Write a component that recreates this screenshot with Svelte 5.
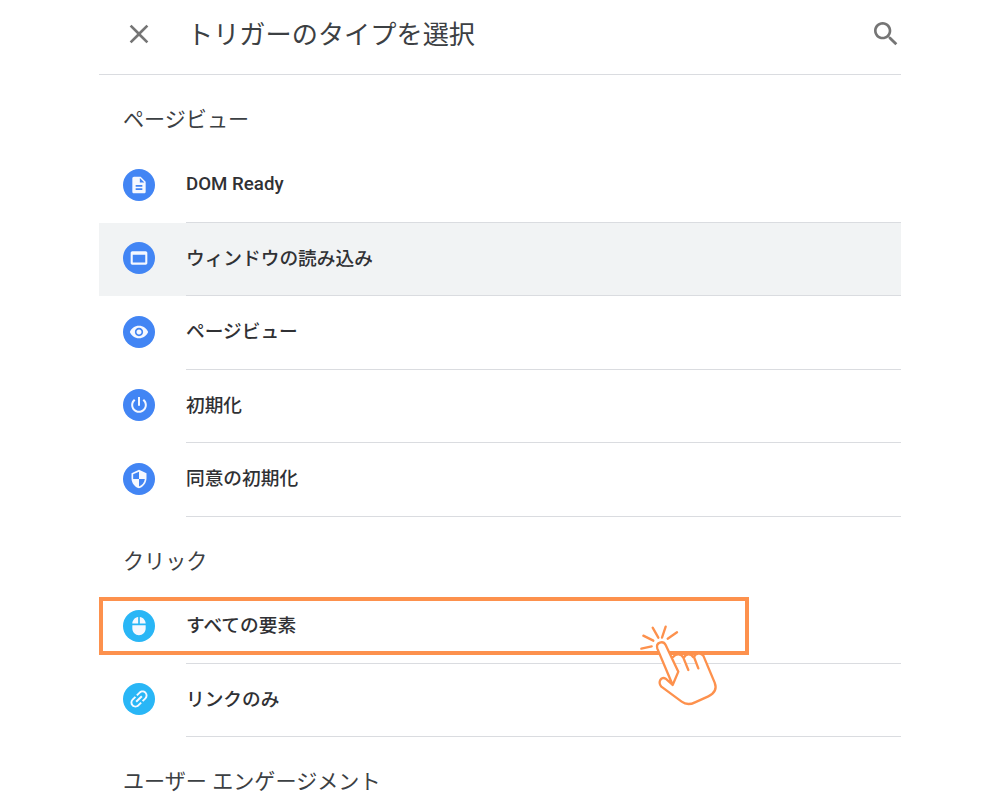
<script>
  const icons = {
    doc: 'M14 2H6c-1.1 0-1.99.9-1.99 2L4 20c0 1.1.89 2 1.99 2H18c1.1 0 2-.9 2-2V8l-6-6zm2 16H8v-2h8v2zm0-4H8v-2h8v2zm-3-5V3.5L18.5 9H13z',
    win: 'M20 4H4c-1.1 0-2 .9-2 2v12c0 1.1.9 2 2 2h16c1.1 0 2-.9 2-2V6c0-1.1-.9-2-2-2zm-.5 13.5h-15V8h15v9.5z',
    eye: 'M12 4.5C7 4.5 2.73 7.61 1 12c1.73 4.39 6 7.5 11 7.5s9.27-3.11 11-7.5c-1.73-4.39-6-7.5-11-7.5zM12 17c-2.76 0-5-2.24-5-5s2.24-5 5-5 5 2.24 5 5-2.24 5-5 5zm0-8c-1.66 0-3 1.34-3 3s1.34 3 3 3 3-1.34 3-3-1.34-3-3-3z',
    power: 'M13.2 2.5h-2.4v10.5h2.4V2.5zm4.8 2.4l-1.7 1.7C17.9 7.9 19 9.8 19 12c0 3.87-3.13 7-7 7s-7-3.13-7-7c0-2.2 1.1-4.1 2.7-5.4L6 4.9C3.9 6.6 2.6 9.1 2.6 12c0 5.2 4.2 9.4 9.4 9.4s9.4-4.2 9.4-9.4c0-2.9-1.3-5.4-3.4-7.1z',
    shield: 'M12 1L3 5v6c0 5.55 3.84 10.74 9 12 5.16-1.26 9-6.45 9-12V5l-9-4zm0 10.99h7c-.53 4.12-3.28 7.79-7 8.94V12H5V6.3l7-3.11v8.8z',
    mouse: 'M13 1.07V9h7c0-4.08-3.05-7.44-7-7.93zM4 15c0 4.42 3.58 8 8 8s8-3.58 8-8v-4H4v4zm7-13.93C7.05 1.56 4 4.92 4 9h7V1.07z',
    link: 'M3.9 12c0-1.71 1.39-3.1 3.1-3.1h4V7H7c-2.76 0-5 2.24-5 5s2.24 5 5 5h4v-1.9H7c-1.71 0-3.1-1.39-3.1-3.1zM8 13h8v-2H8v2zm9-6h-4v1.9h4c1.71 0 3.1 1.39 3.1 3.1s-1.39 3.1-3.1 3.1h-4V17h4c2.76 0 5-2.24 5-5s-2.24-5-5-5z'
  }

  const sections = [
    {
      title: 'ページビュー',
      items: [
        { label: 'DOM Ready', icon: 'doc', latin: true },
        { label: 'ウィンドウの読み込み', icon: 'win', hover: true },
        { label: 'ページビュー', icon: 'eye' },
        { label: '初期化', icon: 'power' },
        { label: '同意の初期化', icon: 'shield' }
      ]
    },
    {
      title: 'クリック',
      items: [
        { label: 'すべての要素', icon: 'mouse', light: true },
        { label: 'リンクのみ', icon: 'link', light: true, tilt: true }
      ]
    },
    { title: 'ユーザー エンゲージメント', items: [] }
  ]
</script>

<div class="panel">
  <header>
    <svg class="close" viewBox="0 0 24 24"><path d="M19 6.41L17.59 5 12 10.59 6.41 5 5 6.41 10.59 12 5 17.59 6.41 19 12 13.41 17.59 19 19 17.59 13.41 12z" /></svg>
    <h1>トリガーのタイプを選択</h1>
    <svg class="search" viewBox="0 0 24 24"><path d="M15.5 14h-.79l-.28-.27C15.41 12.59 16 11.11 16 9.5 16 5.91 13.09 3 9.5 3S3 5.91 3 9.5 5.91 16 9.5 16c1.61 0 3.09-.59 4.23-1.57l.27.28v.79l5 4.99L20.49 19l-4.99-5zm-6 0C7.01 14 5 11.99 5 9.5S7.01 5 9.5 5 14 7.01 14 9.5 11.99 14 9.5 14z" /></svg>
  </header>

  {#each sections as section}
    <h2>{section.title}</h2>
    {#each section.items as item}
      <div class="row" class:hover={item.hover}>
        <span class="badge" class:light={item.light}>
          <svg viewBox="0 0 24 24" class:tilt={item.tilt}><path d={icons[item.icon]} /></svg>
        </span>
        <span class="label" class:latin={item.latin}>{item.label}</span>
      </div>
    {/each}
  {/each}

  <div class="highlight"></div>

  <svg class="hand" viewBox="0 0 420 390">
    <path class="ray" d="M64 176L95 169M70 137L100 152M98 113L115 143M137 110L126 143M171 127L143 146" />
    <path d="M158 285L137 266C124 258 112 276 124 290L185 335C197 344 213 343 225 337L265 319C284 310 291 296 284 278L250 197C242 187 226 190 222 201L235 235M192 203C197 190 213 190 219 201M205 240L190 203C184 190 168 190 160 200M175 245L137 165C130 151 106 156 112 176L158 285Z" />
  </svg>
</div>

<style>
  :global(body) {
    background: #fff;
    overflow: hidden;
  }

  .panel {
    position: relative;
    width: 802px;
    height: 800px;
    margin-left: 99px;
    overflow: hidden;
    font-family: Roboto, "Noto Sans CJK JP", sans-serif;
    color: #303134;
  }

  header {
    display: flex;
    align-items: center;
    height: 75px;
    padding: 0 0 7px 24px;
    box-sizing: border-box;
    border-bottom: 1px solid #dadce0;
    margin-bottom: 0.7px;
  }

  .close {
    width: 32px;
    height: 32px;
    fill: #757575;
  }

  .search {
    width: 32px;
    height: 32px;
    margin-left: auto;
    margin-right: -1px;
    fill: #757575;
  }

  h1 {
    margin: -2px 0 0 32px;
    font-size: 26.2px;
    font-weight: 400;
    color: #3c4043;
  }

  h2 {
    box-sizing: border-box;
    height: 73.5px;
    margin: 0;
    padding: 31px 0 0 24px;
    font-size: 21.1px;
    line-height: 28px;
    font-weight: 400;
    color: #3c4043;
  }

  header + h2 {
    padding-top: 30px;
  }

  .row {
    display: flex;
    align-items: stretch;
    height: 73.5px;
    padding-left: 24px;
    box-sizing: border-box;
  }

  .row.hover {
    background: #f1f3f4;
  }

  .badge {
    flex: none;
    display: flex;
    align-items: center;
    justify-content: center;
    align-self: center;
    width: 32px;
    height: 32px;
    margin-top: -2px;
    margin-right: 31px;
    border-radius: 50%;
    background: #4285f4;
  }

  .badge.light {
    background: #29b6f6;
  }

  .badge svg {
    width: 20px;
    height: 20px;
    fill: #f5f8ff;
  }

  .badge svg.tilt {
    width: 24px;
    height: 24px;
    transform: rotate(-45deg);
  }

  .label {
    flex: 1;
    display: flex;
    align-items: center;
    padding-bottom: 5px;
    border-bottom: 1px solid #dadce0;
    font-size: 18.7px;
    font-weight: 500;
  }

  .label.latin {
    padding-bottom: 3px;
  }

  .highlight {
    position: absolute;
    left: 0;
    top: 597px;
    width: 650px;
    height: 58px;
    box-sizing: border-box;
    border: 4px solid #fd914d;
  }

  .hand {
    position: absolute;
    left: 521px;
    top: 590px;
    width: 140px;
    height: 130px;
    fill: #fff;
    stroke: #fd914d;
    stroke-width: 7;
    stroke-linecap: round;
    stroke-linejoin: round;
  }

  .ray {
    fill: none;
  }
</style>
